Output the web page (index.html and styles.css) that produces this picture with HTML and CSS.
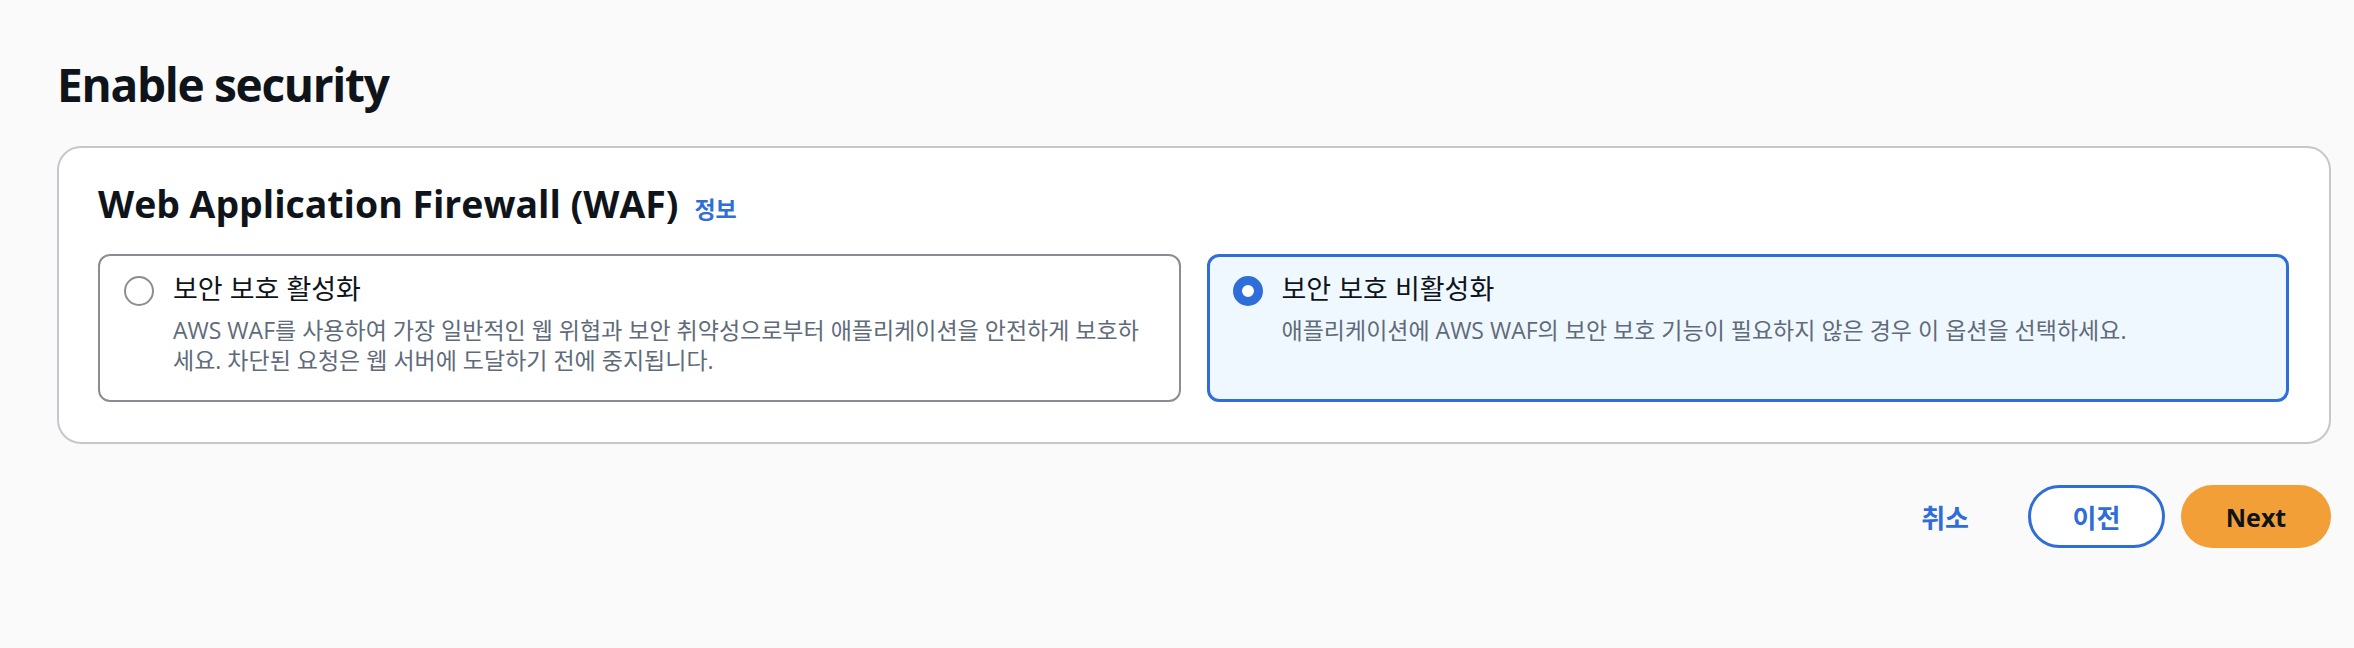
FILE: index.html
```html
<!DOCTYPE html>
<html lang="ko">
<head>
<meta charset="utf-8">
<title>Enable security</title>
<link rel="stylesheet" href="styles.css">
</head>
<body>
<main class="page">
  <h1 class="page-title">Enable security</h1>
  <section class="container">
    <div class="container-header">
      <h2 class="container-title">Web Application Firewall (WAF)</h2>
      <a class="info-link" href="#">정보</a>
    </div>
    <div class="tiles">
      <label class="tile">
        <span class="radio"></span>
        <span class="tile-body">
          <span class="tile-title">보안 보호 활성화</span>
          <span class="tile-desc">AWS WAF를 사용하여 가장 일반적인 웹 위협과 보안 취약성으로부터 애플리케이션을 안전하게 보호하세요. 차단된 요청은 웹 서버에 도달하기 전에 중지됩니다.</span>
        </span>
      </label>
      <label class="tile tile-selected">
        <span class="radio radio-checked"></span>
        <span class="tile-body">
          <span class="tile-title">보안 보호 비활성화</span>
          <span class="tile-desc">애플리케이션에 AWS WAF의 보안 보호 기능이 필요하지 않은 경우 이 옵션을 선택하세요.</span>
        </span>
      </label>
    </div>
  </section>
  <div class="actions">
    <button class="btn btn-link" type="button">취소</button>
    <button class="btn btn-normal" type="button">이전</button>
    <button class="btn btn-primary" type="button">Next</button>
  </div>
</main>
</body>
</html>
```

FILE: styles.css
```css
* {
  box-sizing: border-box;
}

html, body {
  margin: 0;
  padding: 0;
  background: #fafafa;
}

body {
  font-family: "Open Sans", "Noto Sans CJK KR", sans-serif;
  color: #0f141a;
  width: 2354px;
  height: 648px;
  overflow: hidden;
}

.page {
  padding: 56px 23px 0 57px;
}

.page-title {
  margin: 0 0 34px 0;
  font-size: 46px;
  line-height: 56px;
  font-weight: 700;
  letter-spacing: -1.3px;
  color: #0f141a;
}

.container {
  background: #ffffff;
  border: 2px solid #c6c6cd;
  border-radius: 24px;
  padding: 34px 40px 40px 39px;
}

.container-header {
  display: flex;
  align-items: baseline;
  gap: 16px;
  height: 44px;
  margin-bottom: 28px;
}

.container-title {
  margin: 0;
  font-size: 37.4px;
  line-height: 44px;
  font-weight: 700;
  color: #0f141a;
}

.info-link {
  font-family: "Noto Sans CJK KR", sans-serif;
  font-size: 23px;
  font-weight: 700;
  color: #2f6ed9;
  text-decoration: none;
}

.tiles {
  display: grid;
  grid-template-columns: 1fr 1fr;
  gap: 26px;
}

.tile {
  display: flex;
  align-items: flex-start;
  gap: 19px;
  background: #ffffff;
  border: 2px solid #8c8c94;
  border-radius: 12px;
  padding: 16px 24px 25px 24px;
}

.tile-selected {
  background: #f0f8ff;
  border: 3px solid #2f6ed9;
  padding: 15px 23px 24px 23px;
}

.radio {
  flex: none;
  width: 30px;
  height: 30px;
  margin-top: 4px;
  border: 2px solid #8c8c94;
  border-radius: 50%;
  background: #ffffff;
}

.radio-checked {
  border: 9px solid #2f6ed9;
}

.tile-body {
  display: flex;
  flex-direction: column;
  min-width: 0;
}

.tile-title {
  font-size: 27px;
  line-height: 34px;
  height: 34px;
  color: #0f141a;
}

.tile-desc {
  margin-top: 9px;
  font-size: 23px;
  line-height: 30px;
  color: #5f6b7a;
}

.actions {
  display: flex;
  justify-content: flex-end;
  align-items: center;
  gap: 16px;
  margin-top: 41px;
}

.btn {
  font-family: "Open Sans", "Noto Sans CJK KR", sans-serif;
  font-weight: 700;
  height: 63px;
  border-radius: 32px;
  cursor: pointer;
}

.btn-link {
  background: transparent;
  border: none;
  color: #2f6ed9;
  font-size: 26px;
  padding: 0 20px;
  margin-right: 23px;
}

.btn-normal {
  width: 137px;
  background: #ffffff;
  border: 3px solid #2f6ed9;
  color: #2f6ed9;
  font-size: 26px;
}

.btn-primary {
  width: 150px;
  background: #f29f38;
  border: none;
  color: #0f141a;
  font-size: 25px;
}
```
